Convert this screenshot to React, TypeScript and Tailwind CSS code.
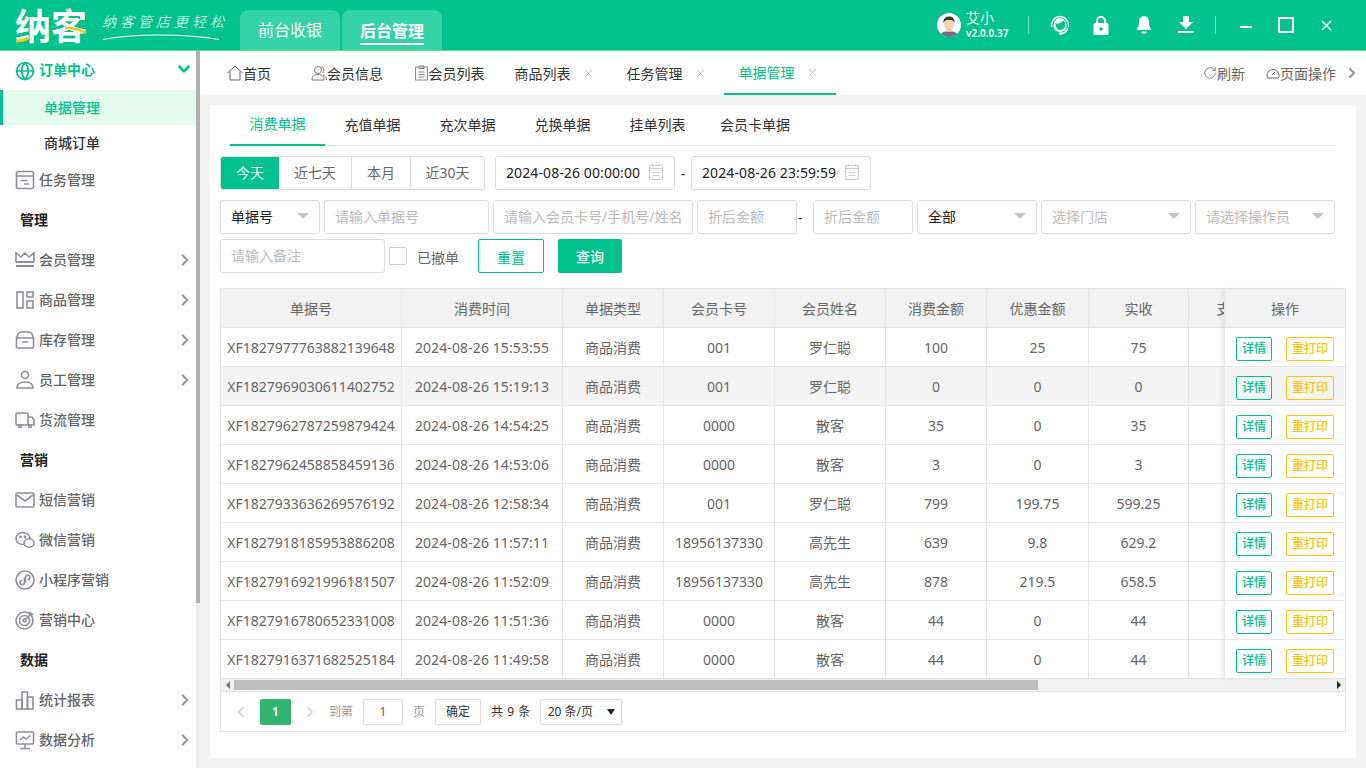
import React from "react";
import { ChevronRight, ChevronLeft, ChevronDown, X, RotateCw, Globe } from "lucide-react";

const F = "font-['Noto_Sans','Noto_Sans_CJK_SC',sans-serif]";

const S = ({ children, cls = "w-5 h-5", vb = "0 0 20 20" }: { children: React.ReactNode; cls?: string; vb?: string }) => (
  <svg viewBox={vb} className={cls} fill="none" stroke="currentColor" strokeWidth="1.6">{children}</svg>
);

const icons: Record<string, React.ReactNode> = {
  task: <S><rect x="1.5" y="1.5" width="17" height="17" rx="2" /><path d="M1.5 6h17M5.5 10.5h7M9 14h5" /></S>,
  crown: <S><path d="M1 12V3l5 4 4-4 4 4 5-4v9" /><path d="M1 12h18M1 16h18" strokeWidth="1.8" /></S>,
  goods: <S><rect x="2" y="2" width="6" height="16" /><rect x="12" y="2" width="6" height="5" /><rect x="12" y="11" width="6" height="7" /></S>,
  store: <S><path d="M2 8c0-4 2-6 5-6h6c3 0 5 2 5 6" /><path d="M1.5 8h17v9a1 1 0 0 1-1 1h-15a1 1 0 0 1-1-1zM7 12h6" /></S>,
  staff: <S><circle cx="10" cy="5" r="3.5" /><path d="M2 18c0-4 3-6 8-6s8 2 8 6z" /></S>,
  truck: <S><rect x="1" y="3" width="12" height="12" rx="1.5" /><path d="M13 7h4l2 3v5h-6" /><circle cx="5" cy="16" r="1.5" /><circle cx="15" cy="16" r="1.5" /></S>,
  mail: <S><rect x="1" y="3" width="18" height="14" rx="1.5" /><path d="M2 5l8 6 8-6" /></S>,
  wechat: <S><ellipse cx="8" cy="8.5" rx="7" ry="6" /><ellipse cx="14" cy="13" rx="5" ry="4.2" fill="white" /><circle cx="5.5" cy="7" r=".6" /><circle cx="10" cy="7" r=".6" /></S>,
  mini: <S><circle cx="10" cy="10" r="9" /><path d="M9.5 7.5v5a2.2 2.2 0 1 1-2.2-2.2M10.5 12.5v-5a2.2 2.2 0 1 1 2.2 2.2" /></S>,
  target: <S><circle cx="9.5" cy="10.5" r="8.5" /><circle cx="9.5" cy="10.5" r="5" /><circle cx="9.5" cy="10.5" r="1.5" /><path d="M10 10l7-7M15 1.5v3h3" /></S>,
  chart: <S><rect x="1.5" y="10" width="5.5" height="9" /><rect x="7" y="2" width="5.5" height="17" /><rect x="12.5" y="7" width="5.5" height="12" /></S>,
  screen: <S><rect x="1.5" y="2" width="17" height="12" rx="1" /><path d="M10 14v4M5 18.5h10M5 10l3.5-3 2.5 2 4-3.500" /></S>,
};

const Item = ({ icon, label, arrow }: { icon: string; label: string; arrow?: boolean }) => (
  <div className="h-10 flex items-center pl-[15px] pr-[2px] text-[#666] text-[14px] font-medium">
    <span className="text-[#8f8f9c] w-5 h-5 shrink-0">{icons[icon]}</span>
    <span className="ml-1 pb-[2px]">{label}</span>
    {arrow && <ChevronRight className="ml-auto w-[18px] h-[18px] text-[#999]" strokeWidth={3} />}
  </div>
);

const Section = ({ label }: { label: string }) => (
  <div className="h-10 flex items-center pl-5 pb-[2px] text-[14px] font-bold text-[#222]">{label}</div>
);

const Sidebar = () => (
  <aside className="w-[200px] shrink-0 flex bg-white">
    <div className="w-[196px] flex flex-col overflow-hidden">
      <div className="h-[39px] shrink-0 flex items-center pl-[15px] pr-[3px] text-[#00c28c] text-[14px] font-bold">
        <Globe className="w-5 h-5" strokeWidth={2} />
        <span className="ml-1 pb-[2px]">订单中心</span>
        <ChevronDown className="ml-auto w-[18px] h-[18px] -translate-y-0.5" strokeWidth={3.5} />
      </div>
      <div className="h-[35px] shrink-0 flex items-center pl-[41px] bg-[#e3fcef] border-l-[3px] border-[#00c28c] text-[#00c28c] text-[14px] font-medium">单据管理</div>
      <div className="h-[35px] shrink-0 flex items-center pl-[44px] text-[#333] text-[14px] font-medium">商城订单</div>
      <Item icon="task" label="任务管理" />
      <Section label="管理" />
      <Item icon="crown" label="会员管理" arrow />
      <Item icon="goods" label="商品管理" arrow />
      <Item icon="store" label="库存管理" arrow />
      <Item icon="staff" label="员工管理" arrow />
      <Item icon="truck" label="货流管理" />
      <Section label="营销" />
      <Item icon="mail" label="短信营销" />
      <Item icon="wechat" label="微信营销" />
      <Item icon="mini" label="小程序营销" />
      <Item icon="target" label="营销中心" />
      <Section label="数据" />
      <Item icon="chart" label="统计报表" arrow />
      <Item icon="screen" label="数据分析" arrow />
    </div>
    <div className="w-1 bg-[#ececec]"><div className="h-[552px] bg-[#b0b0b0]" /></div>
  </aside>
);

const Logo = () => (
  <div className="w-[240px] shrink-0 pl-[15px] flex items-center h-full">
    <div className="relative w-[72px]">
      <span className="block text-[36px] leading-[40px] font-bold text-white whitespace-nowrap mt-[4px]">纳客</span>
      <svg viewBox="0 0 72 40" className="absolute left-0 top-[4px] w-[72px] h-10" fill="none">
        <path d="M1 34c5 0 9-1 12-3" stroke="#f8c21c" strokeWidth="3" />
        <path d="M50 21c7 0 16 2 21 5" stroke="#f8c21c" strokeWidth="2.5" />
      </svg>
    </div>
    <div className="relative ml-[15px] -translate-y-[4px]">
      <span className="block font-['Noto_Sans_CJK_SC',sans-serif] font-light text-[14px] leading-[20px] tracking-[4px] text-white italic whitespace-nowrap">纳客管店更轻松</span>
      <svg viewBox="0 0 118 8" className="absolute left-0 top-[22px] w-[118px] h-2" fill="none">
        <path d="M1 6.500C30 1 80 0 117 6.500" stroke="white" strokeWidth="1.2" />
      </svg>
    </div>
  </div>
);

const Avatar = () => (
  <svg viewBox="0 0 24 24" className="w-6 h-6">
    <circle cx="12" cy="12" r="12" fill="#fff" />
    <clipPath id="av"><circle cx="12" cy="12" r="12" /></clipPath>
    <g clipPath="url(#av)">
      <path d="M3 24c0-4 4-6 9-6s9 2 9 6z" fill="#6f7180" />
      <rect x="9.500" y="14" width="5" height="5" fill="#efc3a6" />
      <ellipse cx="12" cy="11" rx="5" ry="6" fill="#f4cfb3" />
      <path d="M6.500 10C6 5 9 3.500 12 3.500S18 5 17.500 10c-1-2.500-2.500-3-5.500-3S7.500 7.500 6.500 10z" fill="#3a3a3a" />
    </g>
  </svg>
);

const Header = () => (
  <header className="h-[51px] shrink-0 bg-[#00c28c] border-b border-[#5fe08f] flex items-end text-white">
    <Logo />
    <div className="h-10 w-[100px] rounded-t-lg bg-[#33d3a5] flex items-center justify-center text-[16px]">前台收银</div>
    <div className="h-10 w-[100px] ml-0.5 rounded-t-lg bg-[#33d3a5] flex items-center justify-center text-[16px] font-bold">
      <span className="border-b-2 border-white leading-[22px] pb-[1px] mt-[4px]">后台管理</span>
    </div>
    <div className="ml-auto h-[50px] flex items-center pr-[10px]">
      <Avatar />
      <div className="ml-[5px] w-[62px] flex flex-col leading-none">
        <span className="text-[14px] leading-[16px] mt-[-1px]">艾小</span>
        <span className="text-[10px] leading-[14px] font-semibold">v2.0.0.37</span>
      </div>
      <span className="w-px h-[18px] bg-white/50" />
      <div className="w-[62px] flex justify-center">
        <svg viewBox="0 0 22 22" className="w-[22px] h-[22px]" fill="none" stroke="white">
          <path d="M2.500 13V11a8.500 8.500 0 0 1 17 0v2" strokeWidth="1.5" />
          <path d="M4.500 12c0-5 3-8 6.500-8s6.500 3 6.500 8c0 3-2 6-6.500 6-4 0-6.500-3-6.500-6z" fill="white" stroke="none" />
          <path d="M6.500 9.500c3 .5 6-.5 8-3 1 1 2 2.500 2 4 0 3-2.500 5.500-5.500 5.500S6.500 13 6.500 9.500z" fill="#00c28c" stroke="none" />
          <path d="M18.500 14c0 3-3 5.500-6 5.500" strokeWidth="1.4" />
          <circle cx="11.500" cy="19.500" r="1.500" fill="white" stroke="none" />
        </svg>
      </div>
      <div className="w-5 flex justify-center">
        <svg viewBox="0 0 16 20" className="w-4 h-5"><path d="M4 9V6a4 4 0 0 1 8 0v3" fill="none" stroke="white" strokeWidth="2" /><rect x="0.500" y="8" width="15" height="12" rx="1.500" fill="white" /><circle cx="8" cy="14" r="1.800" fill="#00c28c" /></svg>
      </div>
      <div className="w-5 ml-[23px] flex justify-center">
        <svg viewBox="0 0 16 20" className="w-4 h-5" fill="white"><path d="M8 1c-3.500 0-5 3-5 6 0 4-1 5-2 7v1h14v-1c-1-2-2-3-2-7 0-3-1.500-6-5-6z" /><rect x="5.500" y="16.500" width="5" height="2" rx="1" /></svg>
      </div>
      <div className="w-5 ml-[22px] flex justify-center">
        <svg viewBox="0 0 16 18" className="w-4 h-[18px]" fill="white"><path d="M5 0h6v6h4l-7 7-7-7h4z" /><rect y="15" width="16" height="2" /></svg>
      </div>
      <span className="w-px h-[18px] bg-white/50 ml-[19px]" />
      <div className="w-[60px] flex justify-center"><span className="block w-3 h-[2px] bg-white translate-y-[2px]" /></div>
      <div className="w-5 flex justify-center"><span className="w-4 h-4 border-2 border-white block" /></div>
      <div className="w-[60px] flex justify-center"><X className="w-[17px] h-[17px]" strokeWidth={2} /></div>
    </div>
  </header>
);

const NavTab = ({ w, icon, label, close, active }: { w: string; icon?: React.ReactNode; label: string; close?: boolean; active?: boolean }) => (
  <div className={`${w} h-[44px] flex items-center justify-center text-[14px] ${close ? "pr-[3px]" : ""} ${active ? "text-[#00c28c] border-b-2 border-[#00c28c]" : "text-[#333]"}`}>
    {icon}
    <span>{label}</span>
    {close && <X className="w-[13px] h-[13px] ml-[11px] text-[#bbb]" strokeWidth={1.5} />}
  </div>
);

const TopTabs = () => (
  <div className="h-[44px] shrink-0 bg-white flex items-center pl-[12px] text-[#666]">
    <NavTab w="w-[84px] pr-[10px]" label="首页" icon={
      <svg viewBox="0 0 16 16" className="w-4 h-4" fill="none" stroke="#666"><path d="M.5 8L8 1l7.500 7M3 6.500v8.500h10V6.500" /></svg>
    } />
    <NavTab w="w-[102px]" label="会员信息" icon={
      <svg viewBox="0 0 16 16" className="w-4 h-4" fill="none" stroke="#777"><circle cx="7" cy="5" r="3.500" /><path d="M1 15c0-4 2.500-5.500 6-5.500s6 1.500 6 5.500zM10.500 2c2.500.5 3.500 4 1 6M12 10c2 .5 3.500 2 3.500 5" /></svg>
    } />
    <NavTab w="w-[102px]" label="会员列表" icon={
      <svg viewBox="0 0 15 16" className="w-[15px] h-4" fill="none" stroke="#888"><rect x="1.500" y="2" width="12" height="13" /><path d="M5 1h5v2.500H5zM4.500 7h6M4.500 9.500h6M4.500 12h6" /></svg>
    } />
    <NavTab w="w-[112px]" label="商品列表" close />
    <NavTab w="w-[112px]" label="任务管理" close />
    <NavTab w="w-[112px]" label="单据管理" close active />
    <div className="ml-auto flex items-center text-[14px] text-[#666] pr-[6px]">
      <RotateCw className="w-[14px] h-[14px]" strokeWidth={1.3} />
      <span>刷新</span>
      <svg viewBox="0 0 14 14" className="w-[14px] h-[14px] ml-[21px]" fill="none" stroke="#666"><path d="M1.500 12a6 6 0 1 1 11 0z" /><path d="M6 9l3-3" /></svg>
      <span>页面操作</span>
      <ChevronRight className="w-[16px] h-[16px] ml-[8px] text-[#999]" strokeWidth={3.5} />
    </div>
  </div>
);

const Cal = () => (
  <svg viewBox="0 0 16 18" className="w-4 h-[18px] text-[#ccc]" fill="none" stroke="currentColor"><rect x="1.500" y="2.500" width="13" height="14" rx="1" /><path d="M1.500 5.500h13M4.500 1v2M11.500 1v2M4.500 9.500h7M4.500 12.500h7" /></svg>
);
const Caret = () => <span className="w-0 h-0 border-x-[6px] border-x-transparent border-t-[6px] border-t-[#c4c4c4] ml-auto" />;
const box = "h-[34px] border border-[#ddd] rounded-[3px] flex items-center px-[10px] pb-[2px] text-[14px] shrink-0";

const Date_ = ({ v }: { v: string }) => (
  <div className={`${box} w-[180px] text-[#222]`}><span className="tracking-[0.1px]">{v}</span><span className="ml-auto"><Cal /></span></div>
);
const Inp = ({ w, t }: { w: string; t: string }) => <div className={`${box} ${w} text-[#bbb] whitespace-nowrap overflow-hidden`}>{t}</div>;
const Sel = ({ w, t, dark }: { w: string; t: string; dark?: boolean }) => (
  <div className={`${box} ${w} ${dark ? "text-[#222]" : "text-[#bbb]"}`}><span>{t}</span><Caret /></div>
);

const Filters = () => (
  <div className="flex flex-col">
    <div className="flex items-center h-[34px]">
      <div className="w-[265px] h-[34px] border border-[#ddd] rounded-[3px] flex text-[14px] text-[#666] overflow-hidden">
        <span className="w-[58px] pb-[2px] bg-[#00c28c] text-white flex items-center justify-center">今天</span>
        <span className="w-[73px] pb-[2px] border-r border-[#ddd] flex items-center justify-center">近七天</span>
        <span className="w-[59px] pb-[2px] border-r border-[#ddd] flex items-center justify-center">本月</span>
        <span className="flex-1 pb-[2px] flex items-center justify-center">近30天</span>
      </div>
      <div className="w-[10px]" />
      <Date_ v="2024-08-26 00:00:00" />
      <span className="w-4 text-center text-[14px] text-[#333]">-</span>
      <Date_ v="2024-08-26 23:59:59" />
    </div>
    <div className="flex items-center gap-1 mt-[10px]">
      <Sel w="w-[100px]" t="单据号" dark />
      <Inp w="w-[165px]" t="请输入单据号" />
      <Inp w="w-[200px]" t="请输入会员卡号/手机号/姓名" />
      <Inp w="w-[100px]" t="折后金额" />
      <span className="w-[12px] text-[14px] text-[#333] -ml-1 mr-0 pl-[1px]">-</span>
      <Inp w="w-[100px]" t="折后金额" />
      <Sel w="w-[120px]" t="全部" dark />
      <Sel w="w-[150px]" t="选择门店" />
      <Sel w="w-[140px]" t="请选择操作员" />
    </div>
    <div className="flex items-center mt-[5px]">
      <Inp w="w-[165px]" t="请输入备注" />
      <span className="ml-1 w-[18px] h-[18px] border border-[#ccc] rounded-[2px]" />
      <span className="ml-[10px] text-[14px] text-[#666] mt-[2px]">已撤单</span>
      <button className="ml-[19px] w-[66px] h-[34px] pt-[2px] border border-[#00c28c] rounded-[2px] text-[#00c28c] text-[14px] flex items-center justify-center">重置</button>
      <button className="ml-[14px] w-[64px] h-[34px] bg-[#00c28c] rounded-[2px] text-white text-[14px] font-medium flex items-center justify-center">查询</button>
    </div>
  </div>
);

const cols = [
  { w: "w-[181px]", t: "单据号" },
  { w: "w-[161px]", t: "消费时间" },
  { w: "w-[101px]", t: "单据类型" },
  { w: "w-[111px]", t: "会员卡号" },
  { w: "w-[111px]", t: "会员姓名" },
  { w: "w-[101px]", t: "消费金额" },
  { w: "w-[102px]", t: "优惠金额" },
  { w: "w-[100px]", t: "实收" },
  { w: "w-[112px]", t: "支付方式" },
];
const rows = [
  ["XF1827977763882139648", "2024-08-26 15:53:55", "商品消费", "001", "罗仁聪", "100", "25", "75"],
  ["XF1827969030611402752", "2024-08-26 15:19:13", "商品消费", "001", "罗仁聪", "0", "0", "0"],
  ["XF1827962787259879424", "2024-08-26 14:54:25", "商品消费", "0000", "散客", "35", "0", "35"],
  ["XF1827962458858459136", "2024-08-26 14:53:06", "商品消费", "0000", "散客", "3", "0", "3"],
  ["XF1827933636269576192", "2024-08-26 12:58:34", "商品消费", "001", "罗仁聪", "799", "199.75", "599.25"],
  ["XF1827918185953886208", "2024-08-26 11:57:11", "商品消费", "18956137330", "高先生", "639", "9.8", "629.2"],
  ["XF1827916921996181507", "2024-08-26 11:52:09", "商品消费", "18956137330", "高先生", "878", "219.5", "658.5"],
  ["XF1827916780652331008", "2024-08-26 11:51:36", "商品消费", "0000", "散客", "44", "0", "44"],
  ["XF1827916371682525184", "2024-08-26 11:49:58", "商品消费", "0000", "散客", "44", "0", "44"],
];

const Table = () => (
  <div className="mt-[15px] border border-[#e6e6e6] w-[1126px] text-[14px] text-[#666]">
    <div className="flex">
      <div className="flex-1 min-w-0 overflow-hidden">
        <div className="flex h-[39px] bg-[#f2f2f2] border-b border-[#e6e6e6] w-max">
          {cols.map((c) => (
            <div key={c.t} className={`${c.w} border-r border-[#e6e6e6] flex items-center justify-center shrink-0`}>{c.t}</div>
          ))}
        </div>
        {rows.map((r, i) => (
          <div key={r[0]} className={`flex h-[39px] border-b border-[#e6e6e6] w-max ${i === 1 ? "bg-[#f4f4f4]" : "bg-white"}`}>
            {cols.map((c, j) => (
              <div key={c.t} className={`${c.w} border-r border-[#e6e6e6] flex items-center justify-center shrink-0 whitespace-nowrap ${j === 1 ? "tracking-[0.1px]" : ""}`}>{r[j] ?? ""}</div>
            ))}
          </div>
        ))}
      </div>
      <div className="w-[121px] shrink-0 border-l border-[#e6e6e6] shadow-[-3px_0_4px_rgba(0,0,0,0.05)] relative">
        <div className="h-[39px] bg-[#f2f2f2] border-b border-[#e6e6e6] flex items-center justify-center">操作</div>
        {rows.map((r, i) => (
          <div key={r[0]} className={`h-[39px] border-b border-[#e6e6e6] flex items-center pl-[11px] ${i === 1 ? "bg-[#f4f4f4]" : "bg-white"}`}>
            <span className="w-9 h-6 border border-[#00c28c] rounded-[2px] text-[#00c28c] text-[12px] font-medium flex items-center justify-center mt-[4px]">详情</span>
            <span className="ml-[14px] w-12 h-6 border border-[#ffc400] rounded-[2px] text-[#ffc400] text-[12px] font-medium flex items-center justify-center mt-[4px]">重打印</span>
          </div>
        ))}
      </div>
    </div>
    <div className="h-[12px] bg-[#f1f1f1] flex items-center">
      <span className="w-[13px] flex justify-center"><span className="w-0 h-0 border-y-[4px] border-y-transparent border-r-[4px] border-r-[#777]" /></span>
      <div className="w-[804px] h-[10px] bg-[#bdbdbd]" />
      <span className="ml-auto w-[13px] flex justify-center"><span className="w-0 h-0 border-y-[4px] border-y-transparent border-l-[4px] border-l-[#222]" /></span>
    </div>
    <div className="h-[40px] flex items-center pl-[11px] text-[12px] text-[#999] border-t border-[#e6e6e6]">
      <ChevronLeft className="w-[18px] h-[18px] text-[#ccc]" strokeWidth={1.5} />
      <span className="ml-[10px] w-[31px] h-[26px] bg-[#31b46e] rounded-[2px] text-white font-semibold flex items-center justify-center">1</span>
      <ChevronRight className="ml-[10px] w-[18px] h-[18px] text-[#ccc]" strokeWidth={1.5} />
      <span className="ml-[10px]">到第</span>
      <span className="ml-[10px] w-10 h-[26px] border border-[#ddd] rounded-[2px] text-[#666] flex items-center justify-center">1</span>
      <span className="ml-[10px]">页</span>
      <span className="ml-[10px] w-[46px] h-[26px] border border-[#ddd] rounded-[2px] text-[#333] flex items-center justify-center">确定</span>
      <span className="ml-[10px] text-[#333] tracking-[0.5px]">共 9 条</span>
      <span className="ml-[9px] w-[82px] h-[26px] border border-[#ddd] rounded-[2px] text-[#333] flex items-center pl-[7px] pr-[6px]">
        20 条/页<span className="ml-auto w-0 h-0 border-x-[4px] border-x-transparent border-t-[6px] border-t-[#222]" />
      </span>
    </div>
  </div>
);

const subTabs = ["消费单据", "充值单据", "充次单据", "兑换单据", "挂单列表", "会员卡单据"];

export default function App() {
  return (
    <div className={`w-[1366px] h-[768px] overflow-hidden flex flex-col bg-[#f3f3f3] ${F}`}>
      <Header />
      <div className="flex flex-1 min-h-0">
        <Sidebar />
        <main className="flex-1 min-w-0 flex flex-col">
          <TopTabs />
          <div className="mt-[10px] ml-[10px] mr-[10px] h-[653px] bg-white pl-[10px] pr-[10px]">
            <div className="h-[41px] border-b border-[#e6e6e6] flex ml-[10px] mr-[10px] text-[14px] text-[#333]">
              {subTabs.map((t, i) => (
                <div key={t} className={`h-[41px] pb-[2px] flex items-center justify-center ${i === 5 ? "w-[100px]" : "w-[95px]"} ${i === 0 ? "text-[#00c28c] border-b-2 border-[#00c28c]" : ""}`}>{t}</div>
              ))}
            </div>
            <div className="h-[10px]" />
            <Filters />
            <Table />
          </div>
        </main>
      </div>
    </div>
  );
}
